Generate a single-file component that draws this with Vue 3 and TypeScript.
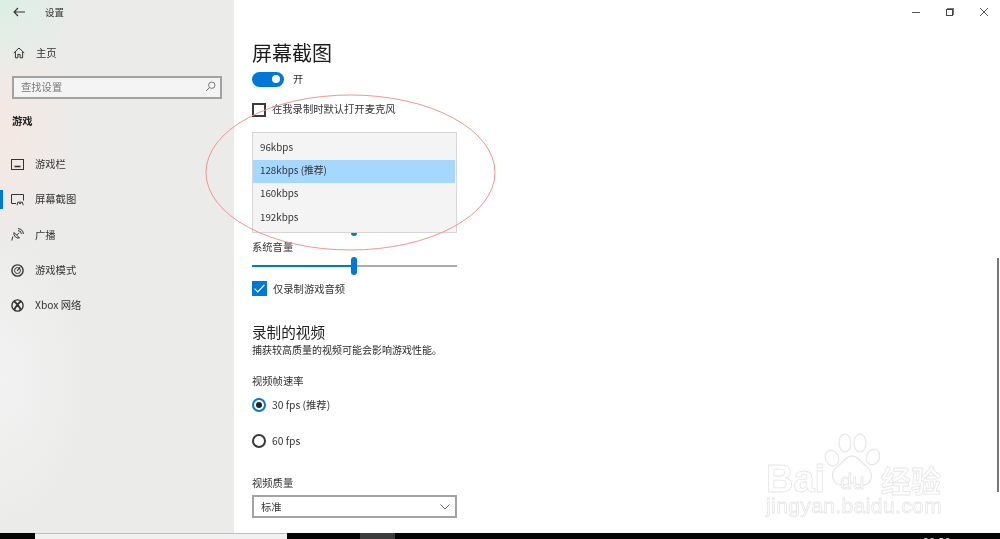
<script setup lang="ts">
const rates: string[] = ['96kbps', '128kbps (推荐)', '160kbps', '192kbps']
const navItems = [
  { label: '游戏栏', icon: 'bar' },
  { label: '屏幕截图', icon: 'capture', active: true },
  { label: '广播', icon: 'cast' },
  { label: '游戏模式', icon: 'mode' },
  { label: 'Xbox 网络', icon: 'xbox' },
]
</script>

<template>
  <div class="screen">
    <div class="window">
      <aside class="sidebar">
        <div class="titlebar">
          <svg class="back" width="12" height="10" viewBox="0 0 12 10" fill="none" stroke="#333" stroke-width="1.1">
            <path d="M12 5H1M5 1 1 5l4 4" />
          </svg>
          <span class="app-name">设置</span>
        </div>
        <div class="home">
          <svg width="12" height="12" viewBox="0 0 12 12" fill="none" stroke="#333" stroke-width="1">
            <path d="M.8 6 6 1l5.2 5M2.4 4.8v6h2.5V7.4h2.2v3.4h2.5v-6" />
          </svg>
          <span>主页</span>
        </div>
        <div class="search">
          <span>查找设置</span>
          <svg width="11" height="11" viewBox="0 0 11 11" fill="none" stroke="#777" stroke-width="1">
            <circle cx="6.8" cy="4.2" r="3.2" />
            <path d="M4.4 6.6 1 10" />
          </svg>
        </div>
        <div class="group">游戏</div>
        <nav class="nav">
          <div v-for="item in navItems" :key="item.label" class="nav-item" :class="{ active: item.active }">
            <svg width="13" height="13" viewBox="0 0 13 13" fill="none" stroke="#333" stroke-width="1">
              <template v-if="item.icon === 'bar'">
                <rect x=".5" y="1.5" width="12" height="10" />
                <path d="M3.5 8.5h6" stroke-width="1.6" />
              </template>
              <template v-else-if="item.icon === 'capture'">
                <path d="M5 10.5H.5v-9h12v6" />
                <path d="M6 12.2l.8-3h4.600l.8 3M8 10.400h2" />
              </template>
              <template v-else-if="item.icon === 'cast'">
                <path d="M3 4.500a4.600 4.600 0 0 0 5.500 5.500L3 4.500ZM1.800 8.500l-1 4M5.800 7 8 4.800" />
                <path d="M7 2.600a3.400 3.400 0 0 1 3.400 3.400M7 .6a5.400 5.400 0 0 1 5.400 5.400" />
              </template>
              <template v-else-if="item.icon === 'mode'">
                <circle cx="6.500" cy="6.500" r="5.600" stroke-width="1.400" />
                <circle cx="6.500" cy="6.500" r="3" />
                <path d="M6.200 6.800 9 3.400" stroke-width="1.200" />
              </template>
              <template v-else>
                <circle cx="6.500" cy="6.500" r="5.600" stroke-width="1.400" />
                <path d="M3 2.400c1.600.8 5.400 5 6.600 8.200M10 2.400C8.400 3.200 4.600 7.400 3.400 10.600" stroke-width="1.800" />
              </template>
            </svg>
            <span>{{ item.label }}</span>
          </div>
        </nav>
      </aside>

      <main class="pane">
        <h1>屏幕截图</h1>
        <div class="toggle-row">
          <span class="toggle"><i></i></span>
          <span>开</span>
        </div>
        <div class="check-row first">
          <span class="box"></span>
          <span class="lifted">在我录制时默认打开麦克风</span>
        </div>

        <div class="audio-hidden">
          <div class="slider under"><span class="fill"></span><span class="thumb"></span></div>
        </div>

        <div class="label system">系统音量</div>
        <div class="slider"><span class="fill"></span><span class="thumb"></span></div>
        <div class="check-row second">
          <span class="box checked">
            <svg width="11" height="9" viewBox="0 0 11 9" fill="none" stroke="#fff" stroke-width="1.200">
              <path d="M.6 4.600 3.800 7.800 10.400.8" />
            </svg>
          </span>
          <span>仅录制游戏音频</span>
        </div>

        <h2>录制的视频</h2>
        <p class="desc">捕获较高质量的视频可能会影响游戏性能。</p>
        <div class="label rate">视频帧速率</div>
        <div class="radio-row">
          <span class="radio on"><i></i></span>
          <span>30 fps (推荐)</span>
        </div>
        <div class="radio-row second-radio">
          <span class="radio"></span>
          <span>60 fps</span>
        </div>
        <div class="label quality">视频质量</div>
        <div class="select">
          <span>标准</span>
          <svg width="10" height="6" viewBox="0 0 10 6" fill="none" stroke="#666" stroke-width="1">
            <path d="M.5.5 5 5 9.500.5" />
          </svg>
        </div>

        <div class="menu">
          <div v-for="(r, i) in rates" :key="r" class="menu-item" :class="{ selected: i === 1 }">{{ r }}</div>
        </div>
      </main>

      <div class="win-controls">
        <span class="min"></span>
        <span class="restore"></span>
        <svg width="8" height="8" viewBox="0 0 8 8" stroke="#444" stroke-width=".9"><path d="M0 0l8 8M8 0 0 8" /></svg>
      </div>
      <div class="scrollbar"></div>

      <svg class="annotation" width="1000" height="533" viewBox="0 0 1000 533" fill="none">
        <ellipse cx="350.500" cy="172.500" rx="144.500" ry="77.500" stroke="#f29494" stroke-width="1" />
      </svg>

      <div class="watermark">
        <svg class="paw" width="56" height="62" viewBox="0 0 56 62" fill="#fff" stroke="#e8e8e8" stroke-width="1.300">
          <ellipse cx="8" cy="26" rx="6.500" ry="8" transform="rotate(-25 8 26)" />
          <ellipse cx="21" cy="11" rx="6" ry="9" />
          <ellipse cx="36" cy="11" rx="6" ry="9" />
          <ellipse cx="49" cy="25" rx="6.500" ry="8" transform="rotate(25 49 25)" />
          <path d="M28 24c7 0 9 7 15 11 7 5 6 19-6 18-4 0-6-2-9-2s-5 2-9 2C7 53 6 40 13 35c6-4 8-11 15-11Z" />
        </svg>
        <div class="wm-top"><span>Bai</span><span class="wm-du">du</span><span class="wm-cn">经验</span></div>
        <div class="wm-url">jingyan.baidu.com</div>
      </div>
    </div>

    <footer class="taskbar">
      <div class="task-search"></div>
      <div class="task-active"></div>
      <div class="clock">20:50</div>
    </footer>
  </div>
</template>

<style>
html,
body {
  margin: 0;
  background: #fff;
  overflow: hidden;
}
</style>

<style scoped>
.screen {
  width: 1000px;
  height: 539px;
  display: flex;
  flex-direction: column;
  overflow: hidden;
  font-family: "Noto Sans CJK SC", "Open Sans", sans-serif;
  font-size: 10.300px;
  line-height: 14px;
  color: #333;
  background: #fff;
  filter: blur(0.35px);
}
.window {
  position: relative;
  flex: 0 0 533px;
  display: flex;
  overflow: hidden;
}
.sidebar {
  flex: 0 0 234px;
  display: flex;
  flex-direction: column;
  background:
    radial-gradient(circle at 0 0, #dcefe4 0, rgba(220, 239, 228, 0) 80px),
    radial-gradient(ellipse 80px 120px at 0 130px, #f5e8e3 0, rgba(245, 232, 227, 0) 100%),
    radial-gradient(ellipse 90px 150px at 0 380px, #f2f2f2 0, rgba(242, 242, 242, 0) 100%),
    #ebebea;
}
.titlebar {
  height: 24px;
  display: flex;
  align-items: center;
  padding-left: 13px;
}
.back {
  flex: none;
}
.app-name {
  margin-left: 20px;
  font-size: 9.500px;
}
.home {
  margin-top: 22px;
  height: 14px;
  display: flex;
  align-items: center;
  gap: 11px;
  padding-left: 13px;
}
.search {
  margin: 16px 12px 0;
  height: 23px;
  box-sizing: border-box;
  border: 2px solid #a2a2a2;
  background: #f4f4f4;
  display: flex;
  align-items: center;
  justify-content: space-between;
  padding: 0 4px 2px 7px;
  color: #777;
}
.group {
  margin: 15px 0 0 12px;
  font-weight: 700;
  color: #222;
}
.nav {
  margin-top: 18.500px;
  display: flex;
  flex-direction: column;
}
.nav-item {
  position: relative;
  height: 35.300px;
  display: flex;
  align-items: center;
  gap: 11px;
  padding-left: 11px;
}
.nav-item.active::before {
  content: "";
  position: absolute;
  left: 0;
  top: 8px;
  width: 3px;
  height: 19px;
  background: #0078d7;
}
.pane {
  position: relative;
  flex: 1;
  display: flex;
  flex-direction: column;
  align-items: flex-start;
  padding-left: 18px;
  background: #fff;
}
h1 {
  margin: 39px 0 0;
  font-size: 20px;
  line-height: 28px;
  font-weight: 400;
  color: #1c1c1c;
}
.toggle-row {
  margin-top: 4px;
  display: flex;
  align-items: center;
  gap: 9px;
  height: 16px;
}
.toggle {
  width: 32px;
  height: 15px;
  border-radius: 8px;
  background: #0078d7;
  display: flex;
  align-items: center;
  justify-content: flex-end;
  padding-right: 4px;
  box-sizing: border-box;
}
.toggle i {
  width: 8px;
  height: 8px;
  border-radius: 50%;
  background: #fff;
}
.check-row {
  display: flex;
  align-items: center;
  gap: 6px;
  height: 15px;
}
.check-row.first {
  margin-top: 15px;
}
.lifted {
  padding-bottom: 2px;
}
.box {
  width: 14px;
  height: 14px;
  box-sizing: border-box;
  border: 2px solid #3a3a3a;
  display: flex;
  align-items: center;
  justify-content: center;
}
.box.checked {
  width: 15px;
  height: 15px;
  background: #0078d7;
  border: none;
}
.audio-hidden {
  margin-top: 112px;
  height: 8px;
}
.slider {
  position: relative;
  width: 205px;
  height: 2px;
  background: #aaa;
}
.slider.under {
  margin-top: -3px;
}
.fill {
  display: block;
  width: 103px;
  height: 2px;
  background: #0078d7;
}
.thumb {
  position: absolute;
  left: 99px;
  top: -8px;
  width: 6px;
  height: 18px;
  border-radius: 3px;
  background: #0078d7;
}
.label.system {
  margin-top: 3px;
  margin-bottom: 11px;
}
.check-row.second {
  margin-top: 14px;
}
h2 {
  margin: 26px 0 0;
  font-size: 14.600px;
  line-height: 20px;
  font-weight: 400;
  color: #222;
}
.desc {
  margin: 1px 0 0;
  font-size: 10px;
  line-height: 14px;
  color: #2a2a2a;
}
.label.rate {
  margin-top: 17px;
}
.radio-row {
  display: flex;
  align-items: center;
  gap: 6px;
  height: 15px;
  margin-top: 9px;
}
.radio-row.second-radio {
  margin-top: 21px;
}
.radio {
  width: 14px;
  height: 14px;
  box-sizing: border-box;
  border: 2px solid #3a3a3a;
  border-radius: 50%;
  display: flex;
  align-items: center;
  justify-content: center;
}
.radio.on {
  border-color: #0078d7;
}
.radio.on i {
  width: 6px;
  height: 6px;
  border-radius: 50%;
  background: #222;
}
.label.quality {
  margin-top: 28px;
}
.select {
  margin-top: 5px;
  width: 205px;
  height: 23px;
  box-sizing: border-box;
  border: 2px solid #a2a2a2;
  display: flex;
  align-items: center;
  justify-content: space-between;
  padding: 0 5px 0 7px;
}
.menu {
  position: absolute;
  left: 18px;
  top: 132px;
  width: 205px;
  height: 101px;
  box-sizing: border-box;
  border: 1px solid #d6d6d6;
  background: #f4f4f4;
  padding-top: 3.500px;
  display: flex;
  flex-direction: column;
  font-size: 9.800px;
}
.menu-item {
  height: 23.300px;
  box-sizing: border-box;
  margin-right: 1px;
  display: flex;
  align-items: center;
  padding: 0 0 3px 7px;
}
.menu-item.selected {
  background: #a6d8ff;
}
.win-controls {
  position: absolute;
  top: 8px;
  left: 912px;
  display: flex;
  align-items: center;
  gap: 26px;
  height: 8px;
}
.min {
  width: 8px;
  height: 1px;
  background: #555;
}
.restore {
  width: 7px;
  height: 7px;
  box-sizing: border-box;
  border: 1px solid #444;
  box-shadow: 1px -1px 0 0 #777;
  margin-right: 1px;
}
.scrollbar {
  position: absolute;
  left: 997px;
  top: 258px;
  width: 2px;
  height: 234px;
  background: #777;
}
.annotation {
  position: absolute;
  left: 0;
  top: 0;
  pointer-events: none;
}
.watermark {
  position: absolute;
  left: 766px;
  top: 432px;
  width: 200px;
  height: 90px;
  color: #fff;
  -webkit-text-stroke: 0.8px #e6e6e6;
  font-family: "Liberation Sans", sans-serif;
}
.paw {
  position: absolute;
  left: 58px;
  top: 0;
}
.wm-top {
  position: absolute;
  left: 0;
  top: 32px;
  display: flex;
  align-items: baseline;
  font-size: 38px;
  line-height: 30px;
  font-weight: 700;
  white-space: nowrap;
}
.wm-du {
  position: absolute;
  left: 74px;
  top: 5px;
  font-size: 22px;
  line-height: 26px;
  font-weight: 400;
}
.wm-cn {
  position: absolute;
  left: 115px;
  top: -1px;
  font-family: "Noto Sans CJK SC", sans-serif;
  font-size: 30px;
  line-height: 32px;
}
.wm-url {
  position: absolute;
  left: 0;
  top: 64px;
  font-size: 21px;
  line-height: 20px;
  letter-spacing: .4px;
  white-space: nowrap;
}
.taskbar {
  position: relative;
  flex: 0 0 6px;
  background: #050505;
  display: flex;
  overflow: hidden;
}
.task-search {
  margin-left: 35px;
  width: 252px;
  background: #f1f1f1;
  border-top: 1px solid #bdbdbd;
  box-sizing: border-box;
}
.task-active {
  margin-left: 73px;
  width: 35px;
  background: #3c3c3c;
}
.clock {
  position: absolute;
  left: 923px;
  top: 3px;
  color: #eee;
  font-family: "Open Sans", sans-serif;
  font-size: 10px;
  line-height: 12px;
  letter-spacing: .5px;
}
</style>
